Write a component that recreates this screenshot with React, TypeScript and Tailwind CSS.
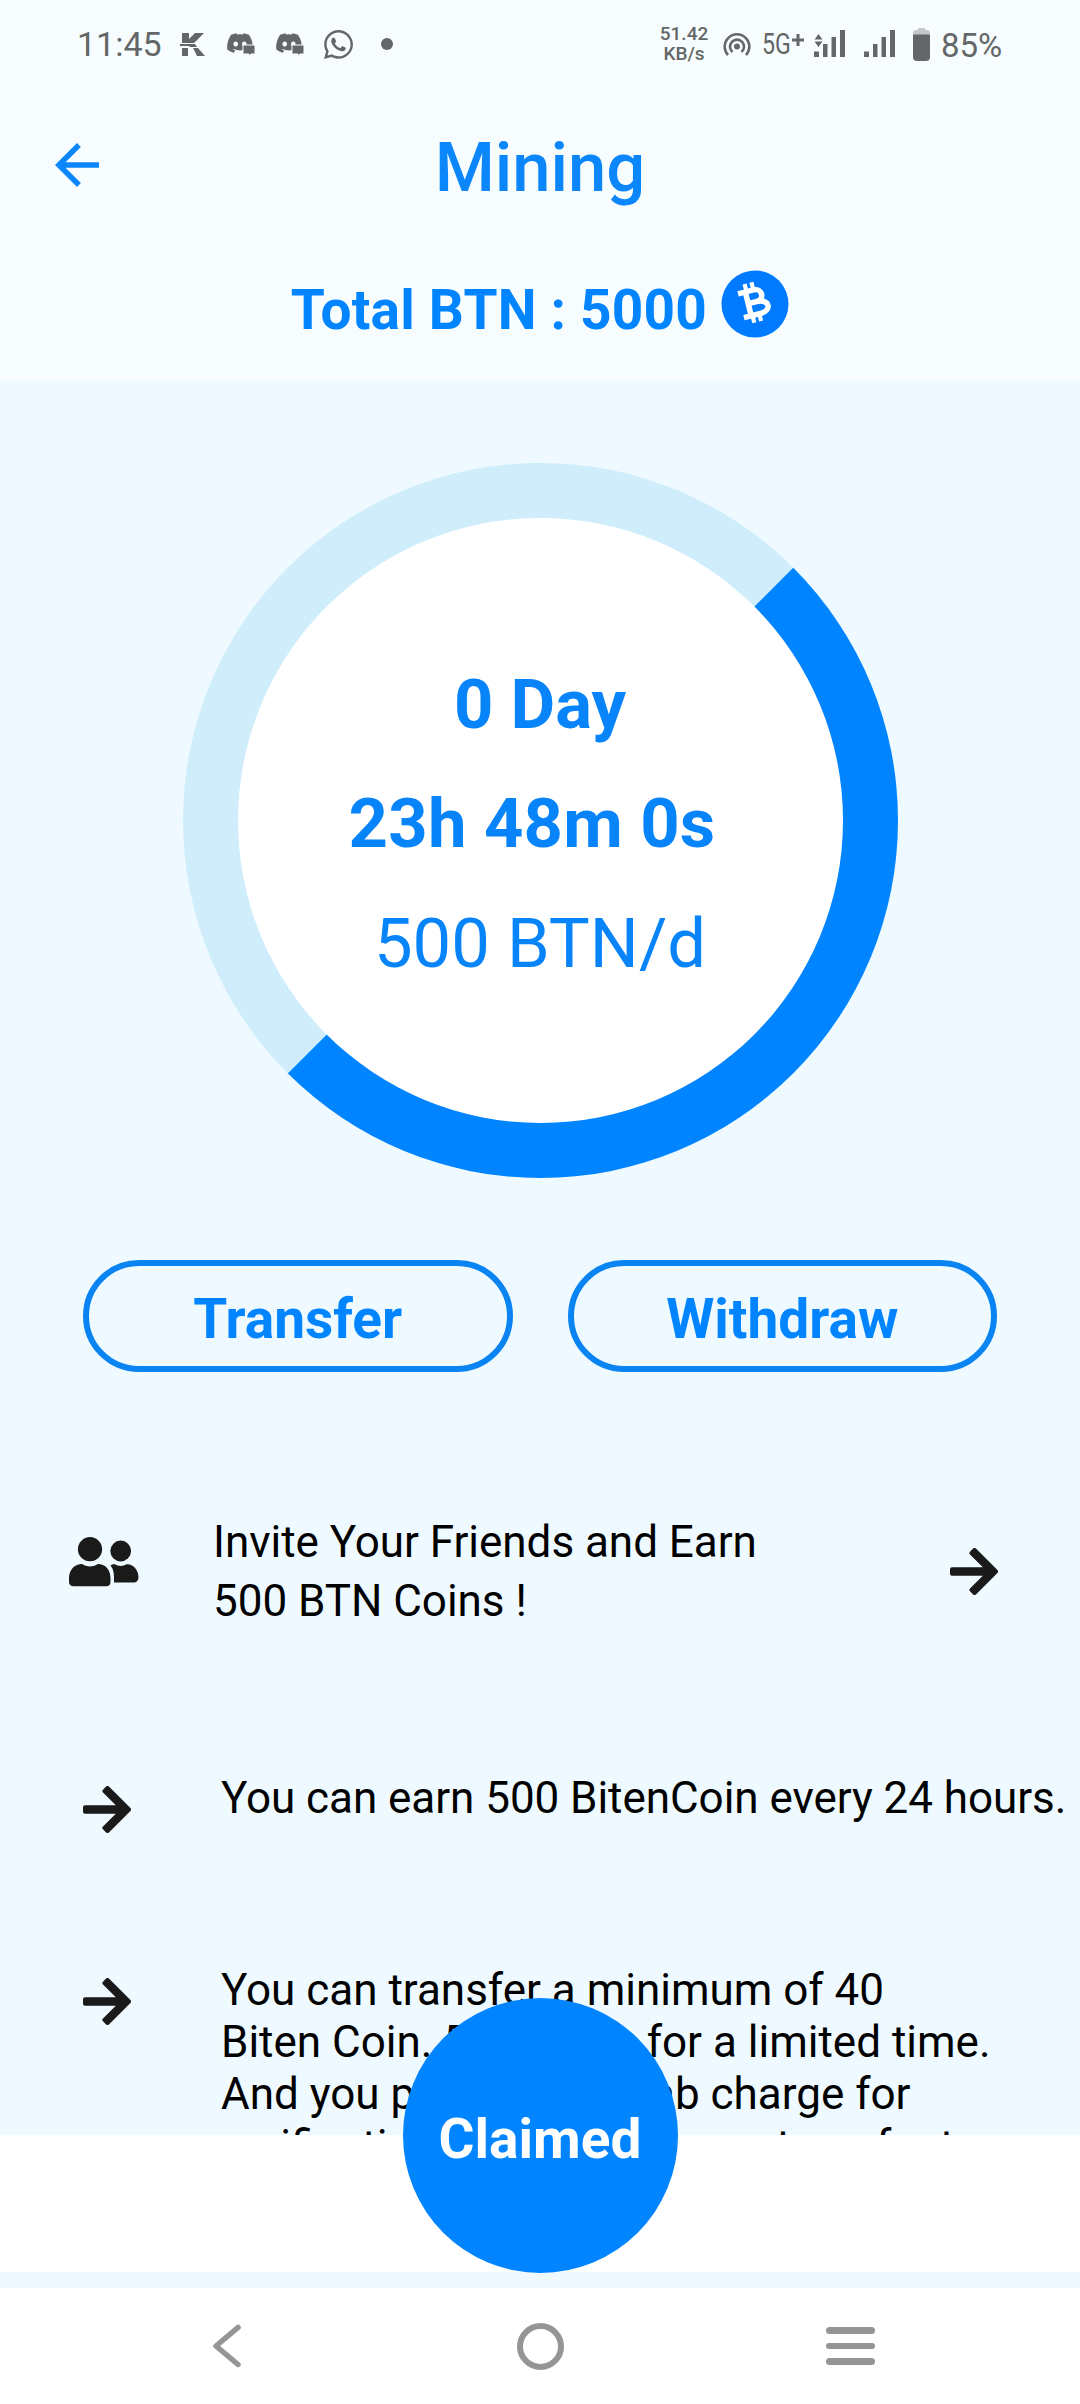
import { FaDiscord, FaWhatsapp } from "react-icons/fa";

const tips = [
  {
    id: "earn",
    lines: ["You can earn 500 BitenCoin every 24 hours."],
  },
  {
    id: "transfer",
    lines: [
      "You can transfer a minimum of 40",
      "Biten Coin. 5 BTN fee for a limited time.",
      "And you pay 50 BTN gab charge for",
      "verification process for your transfer to",
    ],
  },
];

function ArrowRight() {
  return (
    <svg width="48" height="47" viewBox="0 0 48 47" aria-hidden="true" className="shrink-0">
      <path
        d="M2 21.2H37.5L21.4 5.1L24.5 2L46 23.5L24.5 45L21.4 41.9L37.5 25.8H2Z"
        fill="#1a1a1a"
        stroke="#1a1a1a"
        strokeWidth="4"
        strokeLinejoin="round"
      />
    </svg>
  );
}

function People() {
  return (
    <svg
      width="70"
      height="50"
      viewBox="0 0 70 50"
      fill="#1a1a1a"
      aria-hidden="true"
      className="mb-5"
    >
      <circle cx="21" cy="12.2" r="12.1" />
      <circle cx="51.7" cy="14" r="10.4" />
      <path d="M11 27.2C14 26.6 15.500 29.500 21 29.500S28 26.600 31 27.200C37.500 27.700 41.500 34 41.500 41V45C41.500 47.500 40 49.200 37.500 49.200H4.500C1.500 49.200 0 47.500 0 45V41C0 34 4.500 27.700 11 27.200Z" />
      <path d="M41.500 28.500C43 27.200 44.500 27 46 27.300C48 28.600 49.500 29 51.700 29S55.500 28.600 57.500 27.300C65 26.800 69.500 34 69.500 40C69.500 44 67 45.600 64.500 45.600H45C45 39 45.500 33.500 41.500 28.500Z" />
    </svg>
  );
}

function Coin() {
  return (
    <svg width="68" height="68" viewBox="0 0 68 68" aria-hidden="true">
      <circle cx="34" cy="34" r="33.5" fill="#007bff" />
      <g transform="rotate(-14 34 34)" fill="none" stroke="#fff" strokeWidth="5.5">
        <path d="M20 20H36C45 20 45 32 36 32H27M36 32C49.500 32 49.500 44.500 37 44.500H20M27.500 20V44.500" />
        <path d="M28.800 12V20M35.800 12V20M28.800 44V52M35.800 44V52" strokeWidth="4.2" />
      </g>
    </svg>
  );
}

function Signal() {
  return (
    <svg width="32" height="28" viewBox="0 0 32 28" fill="#636767" aria-hidden="true">
      <rect x="0" y="21.500" width="5" height="5.500" />
      <rect x="9" y="14" width="4.500" height="13" />
      <rect x="17.500" y="7" width="4.500" height="20" />
      <rect x="26" y="0" width="5" height="27" />
    </svg>
  );
}

function StatusBar() {
  return (
    <div className="flex h-[88px] items-center pl-[77px] text-[#636767]">
      <span className="w-[103px] text-[34px] leading-none">11:45</span>
      <svg width="25" height="23" viewBox="0 0 25 23" fill="currentColor" aria-hidden="true">
        <path d="M2 0H9V6L15 0H24L14 10H2ZM0 11H15L17 14H10L9 13H0ZM2 15H8V23H2ZM13 15H18L25 23H17Z" />
      </svg>
      {["first", "second"].map((id) => (
        <span key={id} className="relative ml-[21px] block h-[26px] w-[28px]">
          <FaDiscord size={28} className="-mt-0.5" />
          <svg
            width="14"
            height="14"
            viewBox="0 0 14 14"
            aria-hidden="true"
            className="absolute -right-0.5 bottom-0"
          >
            <path d="M1 2H13V11H9L7 13.500V11H1Z" fill="#636767" stroke="#f7fcff" strokeWidth="1" />
          </svg>
        </span>
      ))}
      <FaWhatsapp size={33} className="ml-[19px]" />
      <span className="ml-[26px] size-3 rounded-full bg-[#636767]" />

      <span className="ml-[266px] block w-[50px] text-center text-[19px] font-medium leading-5">
        51.42 KB/s
      </span>
      <svg
        width="28"
        height="26"
        viewBox="0 0 28 26"
        fill="none"
        stroke="currentColor"
        strokeWidth="2.600"
        aria-hidden="true"
        className="ml-[14px]"
      >
        <circle cx="14" cy="15.500" r="3" fill="currentColor" stroke="none" />
        <path d="M5 24A12.300 12.300 0 1 1 23 24" />
        <path d="M9.500 21A7 7 0 1 1 18.500 21" />
      </svg>
      <span className="ml-[11px] block w-[30px]">
        <span className="block origin-left scale-x-[0.8] text-[29px] leading-none">5G</span>
      </span>
      <svg width="12" height="14" viewBox="0 0 12 14" aria-hidden="true" className="-mt-2">
        <path d="M6 1V13M0 7H12" stroke="#636767" strokeWidth="3" />
      </svg>
      <span className="relative ml-[10px]">
        <Signal />
        <svg
          width="9"
          height="13"
          viewBox="0 0 9 13"
          fill="#636767"
          aria-hidden="true"
          className="absolute left-0 top-1"
        >
          <path d="M4.500 0L8.500 5.500H0.500ZM4.500 13L8.500 7.500H0.500Z" />
        </svg>
      </span>
      <span className="ml-[18px]">
        <Signal />
      </span>
      <svg width="17" height="33" viewBox="0 0 17 33" aria-hidden="true" className="ml-[17px]">
        <path d="M5 0H12V2H14Q17 2 17 5V10H0V5Q0 2 3 2H5Z" fill="#c4c8c9" />
        <path d="M0 6.500H17V29Q17 33 13 33H4Q0 33 0 29Z" fill="#636767" />
      </svg>
      <span className="ml-[11px] pt-0.5 text-[33px] leading-none">85%</span>
    </div>
  );
}

function Header() {
  return (
    <header className="h-[380px] shrink-0 bg-[#f7fdff] text-[#0b86fb]">
      <StatusBar />
      <div className="grid h-[161px] grid-cols-[1fr_auto_1fr] items-center">
        <svg
          width="66"
          height="66"
          viewBox="0 0 24 24"
          fill="currentColor"
          aria-label="Back"
          className="-mt-2 ml-11"
        >
          <path d="M20 11H7.830l5.590-5.590L12 4l-8 8 8 8 1.410-1.410L7.830 13H20v-2z" />
        </svg>
        <h1 className="text-[68.75px] font-medium leading-none">Mining</h1>
      </div>
      <div className="flex h-[122px] items-center justify-center gap-[14px] text-[#0084ff]">
        <p className="text-[55px] font-bold leading-none tracking-[0.2px]">Total BTN : 5000</p>
        <span className="-mt-3">
          <Coin />
        </span>
      </div>
    </header>
  );
}

export default function App() {
  return (
    <div className="flex h-[2404px] w-[1080px] flex-col overflow-hidden bg-[#eefaff] font-['Roboto',sans-serif]">
      <Header />

      <main className="h-[1755px] shrink-0 overflow-hidden pt-[82.5px]">
        <div className="mx-auto flex size-[715px] flex-col items-center justify-center rounded-full border-[55px] border-[#d0edfb] border-b-[#0084ff] border-r-[#0084ff] bg-white pt-2 text-[68.75px] leading-[119.5px] text-[#0884fa]">
          <p className="font-bold">0 Day</p>
          <p className="mr-[16px] font-bold tracking-[0.2px]">23h 48m 0s</p>
          <p>500 BTN/d</p>
        </div>

        <div className="mt-[82px] flex gap-[55px] px-[83px]">
          <button className="h-[112px] flex-1 rounded-full border-[6px] border-[#0b84f3] pt-2 text-[55px] font-bold leading-none text-[#0084ff]">
            Transfer
          </button>
          <button className="h-[112px] flex-1 rounded-full border-[6px] border-[#0b84f3] pt-2 text-[55px] font-bold leading-none text-[#0084ff]">
            Withdraw
          </button>
        </div>

        <div className="mt-[141px] flex h-[118px] items-center pl-[69px] text-[44px] leading-[59px]">
          <People />
          <p className="ml-[74px] w-[737px] tracking-[-0.03px]">
            Invite Your Friends and Earn
            <br />
            500 BTN Coins !
          </p>
          <ArrowRight />
        </div>

        <ul className="mt-[141px] flex flex-col gap-[131px] pl-[83px] text-[44px] leading-[52px]">
          {tips.map((tip) => (
            <li key={tip.id} className="flex items-start gap-[90px] first:tracking-[-0.05px]">
              <span className="mt-3.5 block">
                <ArrowRight />
              </span>
              <p className="whitespace-nowrap">
                {tip.lines.map((line) => (
                  <span key={line} className="block">
                    {line}
                  </span>
                ))}
              </p>
            </li>
          ))}
        </ul>
      </main>

      <footer className="relative mb-4 h-[137px] shrink-0 bg-white">
        <button className="absolute -top-[137.500px] left-[402.500px] size-[275px] rounded-full bg-[#0084ff] pt-2 text-[55px] font-bold leading-none text-white">
          Claimed
        </button>
      </footer>

      <nav className="flex h-[116px] shrink-0 items-center bg-white pl-[211px]">
        <svg width="32" height="48" viewBox="0 0 32 48" fill="none" aria-label="Back">
          <path
            d="M27 5.500L5 24L27 42.500"
            stroke="#959595"
            strokeWidth="5.500"
            strokeLinecap="round"
            strokeLinejoin="round"
          />
        </svg>
        <span className="ml-[274px] size-[47px] rounded-full border-[6px] border-[#959595]" />
        <span className="ml-[262px] flex w-[49px] flex-col gap-[9px]">
          <span className="h-[6.500px] rounded-sm bg-[#959595]" />
          <span className="h-[6.500px] rounded-sm bg-[#959595]" />
          <span className="h-[6.500px] rounded-sm bg-[#959595]" />
        </span>
      </nav>
    </div>
  );
}
